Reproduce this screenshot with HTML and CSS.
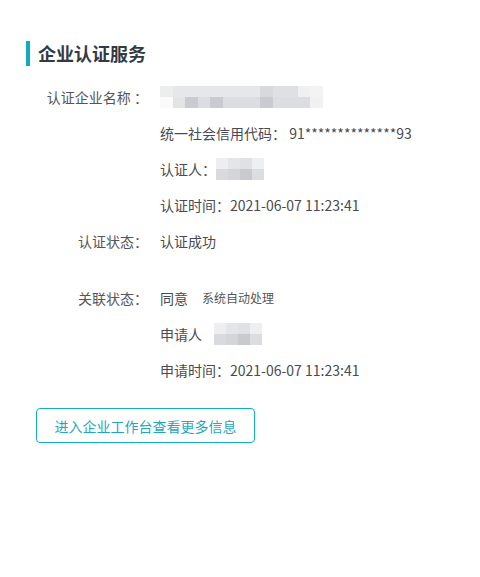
FILE: index.html
```html
<!DOCTYPE html>
<html lang="zh-CN">
<head>
    <meta charset="UTF-8">
    <title>企业认证服务</title>
    <link rel="stylesheet" href="styles.css">
</head>
<body>
    <div class="container">
        <h2 class="title">企业认证服务</h2>
        <div class="info">
            <div class="row">
                <span class="label">认证企业名称 ：</span>
                <span class="value"><span class="mask mask-name"><i></i><i></i><i></i><i></i><i></i><i></i><i></i><i></i><i></i><i></i><i></i><i></i><i></i><i></i><i></i><i></i><i></i><i></i><i></i><i></i><i></i><i></i><i></i><i></i><i></i><i></i></span></span>
            </div>
            <div class="row">
                <span class="label"></span>
                <span class="value">统一社会信用代码：&nbsp;91**************93</span>
            </div>
            <div class="row">
                <span class="label"></span>
                <span class="value">认证人：<span class="mask mask-person"><i></i><i></i><i></i><i></i><i></i><i></i><i></i><i></i></span></span>
            </div>
            <div class="row">
                <span class="label"></span>
                <span class="value">认证时间：2021-06-07 11:23:41</span>
            </div>
            <div class="row">
                <span class="label">认证状态：</span>
                <span class="value">认证成功</span>
            </div>
            <div class="row row-gap">
                <span class="label">关联状态：</span>
                <span class="value">同意 <small class="note">系统自动处理</small></span>
            </div>
            <div class="row">
                <span class="label"></span>
                <span class="value">申请人<span class="mask mask-person mask-spaced"><i></i><i></i><i></i><i></i><i></i><i></i><i></i><i></i></span></span>
            </div>
            <div class="row">
                <span class="label"></span>
                <span class="value">申请时间：2021-06-07 11:23:41</span>
            </div>
        </div>
        <button class="btn">进入企业工作台查看更多信息</button>
    </div>
</body>
</html>
```

FILE: styles.css
```css
/* Global Styles */
body {
    font-family: "Microsoft YaHei", "Noto Sans CJK SC", "Liberation Sans", sans-serif;
    background-color: #fff;
    color: #444;
    font-size: 14px;
    margin: 0;
    padding: 0;
}
.container {
    padding: 41px 26px 0;
}
.title {
    margin: 0;
    padding-left: 8px;
    border-left: 4px solid #12aac1;
    font-size: 18px;
    line-height: 25px;
    font-weight: bold;
    color: #333a44;
}
.info {
    margin-top: 13px;
}
.row {
    display: flex;
    align-items: center;
    height: 36px;
    line-height: 20px;
}
.row-gap {
    margin-top: 21px;
}
.label {
    width: 122px;
    flex-shrink: 0;
    text-align: right;
    color: #555;
    white-space: nowrap;
}
.value {
    margin-left: 12px;
    display: flex;
    align-items: center;
    white-space: nowrap;
    color: #4a4a52;
}
.note {
    font-size: 12px;
    margin-left: 14px;
    color: #555;
}
/* blurred mosaic over private data */
.mask {
    display: inline-grid;
    grid-template-rows: 11px 11px;
    grid-auto-flow: column;
    filter: blur(0.6px);
}
.mask i {
    display: block;
    width: 12px;
    background: #e6e7ea;
}
.mask-name {
    grid-template-columns: repeat(13, 12.5px);
    border-radius: 6px 0 0 6px;
}
.mask-name i {
    width: auto;
}
.mask-name i:nth-child(2n) { background: #dcdde1; }
.mask-name i:nth-child(1) { background: #eceded; }
.mask-name i:nth-child(2) { background: #fafafa; }
.mask-name i:nth-child(4) { background: #e2e4e6; }
.mask-name i:nth-child(6),
.mask-name i:nth-child(10),
.mask-name i:nth-child(18) { background: #c9cbd0; }
.mask-name i:nth-child(17) { background: #d8d9de; }
.mask-name i:nth-child(19),
.mask-name i:nth-child(21) { background: #dfe0e4; }
.mask-name i:nth-child(23) { background: #eff0f1; }
.mask-name i:nth-child(25) { background: #f3f3f4; }
.mask-name i:nth-child(26) { background: #f1f1f2; }
.mask-person {
    grid-template-columns: repeat(4, 12px);
}
.mask-spaced {
    margin-left: 12px;
}
.mask-person i:nth-child(1) { background: #eeeef0; }
.mask-person i:nth-child(2) { background: #d9dadd; }
.mask-person i:nth-child(3) { background: #e4e5e8; }
.mask-person i:nth-child(4) { background: #d4d5d9; }
.mask-person i:nth-child(5) { background: #e0e1e4; }
.mask-person i:nth-child(6) { background: #c9cacf; }
.mask-person i:nth-child(7) { background: #eeeff1; }
.mask-person i:nth-child(8) { background: #dcdde0; }
.btn {
    margin: 20px 0 0 10px;
    width: 219px;
    height: 35px;
    background-color: #fff;
    border: 1px solid #12aec6;
    border-radius: 4px;
    color: #1fa7bd;
    font-family: inherit;
    font-size: 14px;
    cursor: pointer;
    padding: 0;
}
```
